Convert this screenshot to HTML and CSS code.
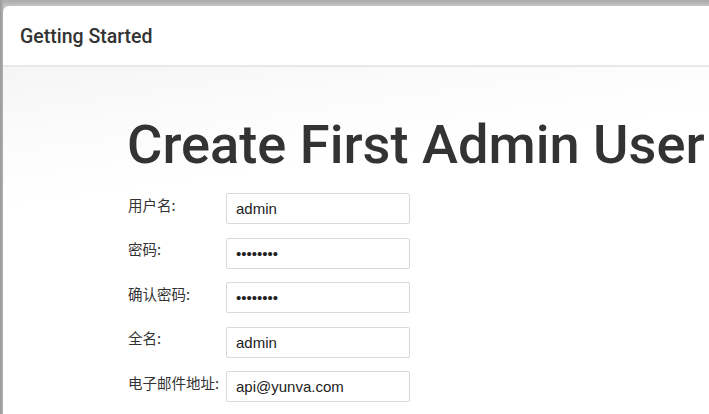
FILE: index.html
```html
<!DOCTYPE html>
<html lang="zh">
<head>
<meta charset="utf-8">
<title>Getting Started</title>
<link rel="stylesheet" href="styles.css">
</head>
<body>
<div class="page">
  <div class="card">
    <div class="header">Getting Started</div>
    <div class="content">
      <h1 class="title">Create First Admin User</h1>
      <form class="form">
        <label class="label" for="u">用户名:</label>
        <input class="field" id="u" type="text" value="admin">
        <label class="label" for="p1">密码:</label>
        <input class="field" id="p1" type="password" value="12345678">
        <label class="label" for="p2">确认密码:</label>
        <input class="field" id="p2" type="password" value="12345678">
        <label class="label" for="n">全名:</label>
        <input class="field" id="n" type="text" value="admin">
        <label class="label" for="e">电子邮件地址:</label>
        <input class="field" id="e" type="text" value="api@yunva.com">
      </form>
    </div>
  </div>
</div>
</body>
</html>
```
FILE: styles.css
```css
html, body {
  margin: 0;
  padding: 0;
  height: 100%;
  overflow: hidden;
}
body {
  background: linear-gradient(to bottom, #a9a9a9 0, #c4c4c4 6px);
  font-family: Roboto, "Noto Sans CJK SC", sans-serif;
  color: #333;
}
.page {
  padding: 6px 0 0 3px;
  height: 100%;
  box-sizing: border-box;
  background: linear-gradient(to right, #9a9a9a 0, #b0b0b0 3px, transparent 3px);
}
.card {
  background: #fff;
  border-top-left-radius: 6px;
  height: 100%;
  overflow: hidden;
}
.header {
  height: 61px;
  box-sizing: border-box;
  display: flex;
  align-items: center;
  padding: 2px 0 0 17px;
  font-size: 19.5px;
  font-weight: 500;
  color: #333;
  border-bottom: 2px solid #e8e8e8;
}
.content {
  padding: 51px 0 0 125px;
  height: 100%;
  background: linear-gradient(172deg, #f5f5f5 0, #fbfbfb 70px, #fff 140px);
}
.title {
  margin: 0 0 0 -1px;
  font-size: 54.2px;
  line-height: 54px;
  font-weight: 500;
  color: #333;
  white-space: nowrap;
}
.form {
  margin-top: 21px;
  display: grid;
  grid-template-columns: 98px 184px;
  row-gap: 13.5px;
  align-items: start;
}
.label {
  font-family: "Noto Sans CJK SC", sans-serif;
  font-size: 14.5px;
  line-height: 20px;
  padding-top: 1.5px;
  color: #333;
  white-space: nowrap;
}
.field {
  box-sizing: border-box;
  width: 184px;
  height: 31px;
  margin: 0;
  padding: 0 8px 0 9px;
  border: 1px solid #d9d9d9;
  border-radius: 2px;
  background: #fff;
  font-family: "Liberation Sans", Arial, sans-serif;
  font-size: 15px;
  color: #222;
  outline: none;
}
```
